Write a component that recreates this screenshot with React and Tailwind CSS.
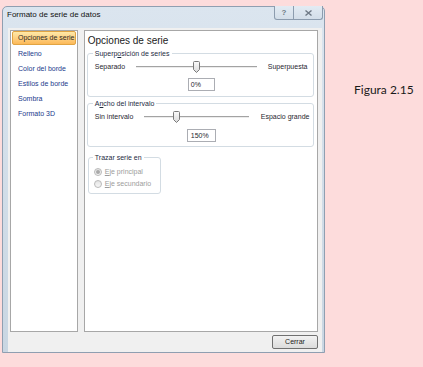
import React from "react";

const items = ["Relleno", "Color del borde", "Estilos de borde", "Sombra", "Formato 3D"];

function Thumb() {
  return (
    <svg width="7" height="12" viewBox="0 0 7 12" className="block">
      <defs>
        <linearGradient id="tg" x1="0" x2="0" y1="0" y2="1">
          <stop offset="0" stopColor="#fbfbfb" />
          <stop offset="1" stopColor="#d9d9d9" />
        </linearGradient>
      </defs>
      <path d="M1.5 0.5 H5.5 Q6.5 0.5 6.5 1.5 V8.5 L3.5 11.5 L0.5 8.5 V1.5 Q0.5 0.5 1.5 0.5 Z" fill="url(#tg)" stroke="#7a7a7a" strokeWidth="1" />
    </svg>
  );
}

function Slider({ width, thumb }) {
  return (
    <div className="relative h-[12px] flex items-center" style={{ width }}>
      <div className="w-full h-[2px] border-t border-t-[#a3a3a3] border-b border-b-[#ececec]" />
      <div className="absolute top-0" style={{ left: thumb }}>
        <Thumb />
      </div>
    </div>
  );
}

function Radio({ checked }) {
  return (
    <span className="w-[8px] h-[8px] rounded-full border border-[#b9b9b9] bg-gradient-to-b from-[#e4e4e4] to-[#f7f7f7] flex items-center justify-center">
      {checked && <span className="w-[4px] h-[4px] rounded-full bg-[#a9a9a9]" />}
    </span>
  );
}

export default function App() {
  return (
    <div className="w-[423px] h-[367px] bg-[#fddcdc] flex items-start font-['Liberation_Sans',Arial,sans-serif] overflow-hidden">
      <div className="ml-[2px] mt-[6px] w-[323px] h-[347px] border border-[#8f9fb1] rounded-t-[5px] bg-gradient-to-b from-[#dbe5ef] to-[#c9d6e2] flex flex-col">
        <div className="h-[21px] flex items-start justify-between">
          <span className="pl-[4px] pt-[3px] text-[8px] leading-[10px] text-[#111]">Formato de serie de datos</span>
          <div className="flex -mt-[1px] mr-[1px] h-[14px] border border-[#8c9cae] border-t-0 rounded-b-[3px] bg-gradient-to-b from-[#e3ebf3] to-[#d3dee9] overflow-hidden">
            <div className="w-[19px] flex items-center justify-center border-r border-[#8c9cae] text-[8px] leading-none font-bold text-[#6f7a86]">?</div>
            <div className="w-[28px] flex items-center justify-center">
              <svg width="7" height="6" viewBox="0 0 7 6">
                <path d="M0.5 0.5 L6.5 5.5 M6.5 0.5 L0.5 5.5" stroke="#6f7a86" strokeWidth="1.4" />
              </svg>
            </div>
          </div>
        </div>
        <div className="flex-1 ml-[5px] mr-[2px] bg-[#f0f0f0] pl-[2px] pt-[2px] pr-[4px] flex flex-col">
          <div className="flex gap-[6px] h-[302px]">
            <div className="w-[68px] h-full border border-[#a7a7a7] bg-white px-[1px] text-[7px] leading-[15px] text-[#1b3a8c] whitespace-nowrap">
              <div className="h-[14px] leading-[12px] rounded-[2px] border border-[#e1a443] bg-gradient-to-b from-[#ffe9a8] to-[#fcb958] pl-[5px] text-[#2b2b2b] overflow-hidden">
                Opciones de serie
              </div>
              <div className="h-[1px]" />
              {items.map((t) => (
                <div key={t} className="h-[15px] pl-[6px]">{t}</div>
              ))}
            </div>
            <div className="w-[235px] h-full border border-[#a7a7a7] bg-white pl-[2px] pr-[3px] pt-[3px] text-[7px] text-[#1f2630] whitespace-nowrap">
              <div className="pl-[1px] text-[10px] leading-[14px] text-[#1a1a1a]">Opciones de serie</div>
              <fieldset className="mt-[1px] h-[48px] border border-[#d3dce3] rounded-[3px] pl-[7px]">
                <legend className="ml-[-2px] px-[2px] text-[7px] leading-[9px] text-[#1d2b3f]">
                  Superp<span className="underline">o</span>sición de series
                </legend>
                <div className="pt-[3px] h-[15px] flex items-center">
                  <span className="w-[41px] leading-[12px]">Separado</span>
                  <Slider width="121px" thumb="57px" />
                  <span className="ml-[11px] leading-[12px]">Superpuesta</span>
                </div>
                <div className="mt-[5px] ml-[93px] w-[27px] h-[13px] border border-[#abadb3] pl-[2px] leading-[11px]">0%</div>
              </fieldset>
              <fieldset className="mt-[2px] h-[48px] border border-[#d3dce3] rounded-[3px] pl-[7px]">
                <legend className="ml-[-2px] px-[2px] text-[7px] leading-[9px] text-[#1d2b3f]">
                  A<span className="underline">n</span>cho del intervalo
                </legend>
                <div className="pt-[3px] h-[15px] flex items-center">
                  <span className="w-[49px] leading-[12px]">Sin intervalo</span>
                  <Slider width="105px" thumb="29px" />
                  <span className="ml-[12px] leading-[12px]">Espacio grande</span>
                </div>
                <div className="mt-[6px] ml-[92px] w-[29px] h-[13px] border border-[#abadb3] pl-[3px] leading-[11px]">150%</div>
              </fieldset>
              <fieldset className="mt-[6px] ml-[1px] w-[73px] h-[41px] border border-[#d3dce3] rounded-[3px] pl-[5px]">
                <legend className="ml-[-1px] px-[2px] text-[7px] leading-[9px] text-[#1d2b3f]">Trazar serie en</legend>
                <div className="pt-[4px] h-[16px] flex items-center gap-[3px] text-[#9c9c9c]">
                  <Radio checked />
                  <span><span className="underline">E</span>je principal</span>
                </div>
                <div className="h-[12px] flex items-center gap-[3px] text-[#9c9c9c]">
                  <Radio />
                  <span><span className="underline">E</span>je secundario</span>
                </div>
              </fieldset>
            </div>
          </div>
          <div className="mt-[3px] flex justify-end">
            <button className="w-[46px] h-[14px] rounded-[2px] border border-[#707070] bg-gradient-to-b from-[#f2f2f2] to-[#dcdcdc] text-[7px] leading-[12px] text-[#1a1a1a]">
              Cerrar
            </button>
          </div>
        </div>
      </div>
      <div className="ml-[29px] mt-[82px] text-[12px] leading-[16px] text-[#1a1a1a] font-['Lato',sans-serif]">Figura 2.15</div>
    </div>
  );
}
